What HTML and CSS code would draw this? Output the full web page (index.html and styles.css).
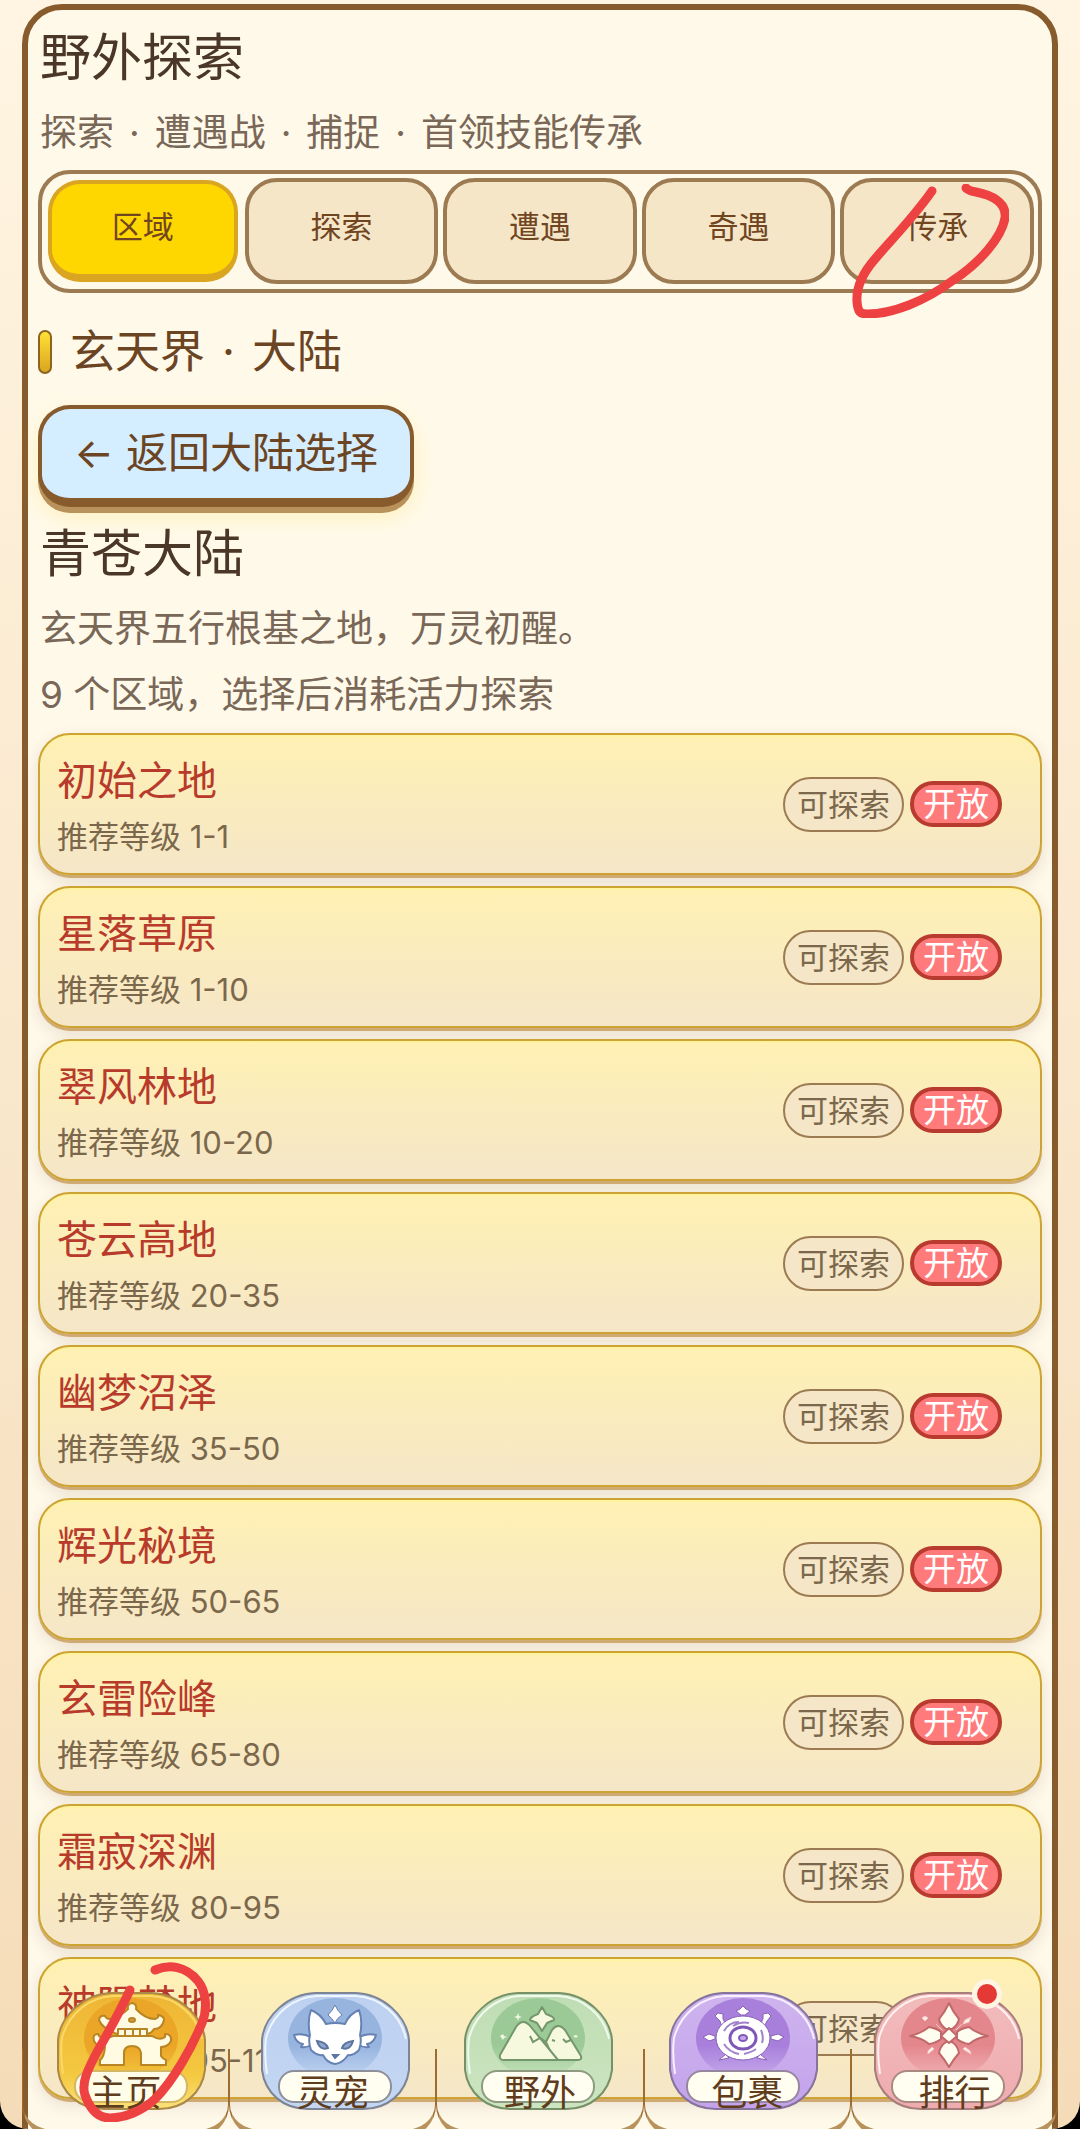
FILE: index.html
```
<!DOCTYPE html>
<html lang="zh-CN">
<head>
    <meta charset="UTF-8">
    <meta name="viewport" content="width=device-width, initial-scale=1.0">
    <title>野外探索</title>
    <link rel="stylesheet" href="styles.css">
</head>
<body>
    <div class="screen">
        <main class="panel">
            <h1 class="title">野外探索</h1>
            <p class="desc">探索<span class="dot">·</span>遭遇战<span class="dot">·</span>捕捉<span class="dot">·</span>首领技能传承</p>

            <div class="tabs">
                <button class="tab active">区域</button>
                <button class="tab">探索</button>
                <button class="tab">遭遇</button>
                <button class="tab">奇遇</button>
                <button class="tab">传承</button>
                <svg class="mark mark-tab" viewBox="0 0 160 134" aria-hidden="true">
                    <path d="M83 7C64 34 44 54 26 75C12 91 7 104 8 118C9 128 11 130 18 130C44 130 76 117 103 97C131 79 153 53 156 34C158 18 142 11 127 8Q120 7 117 4"/>
                </svg>
            </div>

            <h3 class="section">玄天界<span class="dot">·</span>大陆</h3>
            <button class="back-btn">← 返回大陆选择</button>

            <h2 class="title">青苍大陆</h2>
            <p class="desc">玄天界五行根基之地，万灵初醒。</p>
            <p class="desc">9 个区域，选择后消耗活力探索</p>

            <div class="area-list">
                <div class="area">
                    <div class="info"><div class="name">初始之地</div><div class="level">推荐等级 1-1</div></div>
                    <div class="tags"><span class="tag">可探索</span><span class="tag open">开放</span></div>
                </div>
                <div class="area">
                    <div class="info"><div class="name">星落草原</div><div class="level">推荐等级 1-10</div></div>
                    <div class="tags"><span class="tag">可探索</span><span class="tag open">开放</span></div>
                </div>
                <div class="area">
                    <div class="info"><div class="name">翠风林地</div><div class="level">推荐等级 10-20</div></div>
                    <div class="tags"><span class="tag">可探索</span><span class="tag open">开放</span></div>
                </div>
                <div class="area">
                    <div class="info"><div class="name">苍云高地</div><div class="level">推荐等级 20-35</div></div>
                    <div class="tags"><span class="tag">可探索</span><span class="tag open">开放</span></div>
                </div>
                <div class="area">
                    <div class="info"><div class="name">幽梦沼泽</div><div class="level">推荐等级 35-50</div></div>
                    <div class="tags"><span class="tag">可探索</span><span class="tag open">开放</span></div>
                </div>
                <div class="area">
                    <div class="info"><div class="name">辉光秘境</div><div class="level">推荐等级 50-65</div></div>
                    <div class="tags"><span class="tag">可探索</span><span class="tag open">开放</span></div>
                </div>
                <div class="area">
                    <div class="info"><div class="name">玄雷险峰</div><div class="level">推荐等级 65-80</div></div>
                    <div class="tags"><span class="tag">可探索</span><span class="tag open">开放</span></div>
                </div>
                <div class="area">
                    <div class="info"><div class="name">霜寂深渊</div><div class="level">推荐等级 80-95</div></div>
                    <div class="tags"><span class="tag">可探索</span><span class="tag open">开放</span></div>
                </div>
                <div class="area">
                    <div class="info"><div class="name">神陨禁地</div><div class="level">推荐等级 95-110</div></div>
                    <div class="tags"><span class="tag">可探索</span><span class="tag open">开放</span></div>
                </div>
            </div>
        </main>

        <nav class="nav">
            <svg class="nav-art" viewBox="0 0 1036 137" aria-hidden="true">
                <defs>
                    <linearGradient id="gold" x1="0" y1="0" x2="0" y2="1"><stop offset="0" stop-color="#efb535"/><stop offset="0.7" stop-color="#f4c840"/><stop offset="1" stop-color="#fbe17a"/></linearGradient>
                    <linearGradient id="blue" x1="0" y1="0" x2="0" y2="1"><stop offset="0" stop-color="#bdd0f0"/><stop offset="1" stop-color="#c3d7f4"/></linearGradient>
                    <linearGradient id="green" x1="0" y1="0" x2="0" y2="1"><stop offset="0" stop-color="#bfddb4"/><stop offset="1" stop-color="#cbe5c0"/></linearGradient>
                    <linearGradient id="purple" x1="0" y1="0" x2="0" y2="1"><stop offset="0" stop-color="#cfb4ee"/><stop offset="1" stop-color="#c3a3ec"/></linearGradient>
                    <linearGradient id="pink" x1="0" y1="0" x2="0" y2="1"><stop offset="0" stop-color="#f2bcbc"/><stop offset="1" stop-color="#efabb0"/></linearGradient>
                    <linearGradient id="fade" x1="0" y1="0" x2="0" y2="1"><stop offset="0.6" stop-color="#fff"/><stop offset="1" stop-color="#000"/></linearGradient>
                    <mask id="disc-mask" maskContentUnits="objectBoundingBox"><rect width="1" height="1" fill="url(#fade)"/></mask>
                    <path id="plate" d="M54 1H95C122 2 146 24 148 48V78C145 101 127 117 102 117H47C22 117 4 101 1 78V48C3 24 27 2 54 1Z"/>
                    <path id="shine" d="M6 82Q3 62 5 46C12 20 34 5 56 4H94C119 5 140 23 145 47"/>
                    <ellipse id="disc" cx="74" cy="46" rx="47" ry="40"/>
                    <rect id="pill" x="18" y="79" width="112" height="31" rx="15"/>
                </defs>

                <!-- 主页 -->
                <g transform="translate(35 0)">
                    <use href="#plate" fill="url(#gold)" stroke="#a9884a" stroke-width="2"/>
                    <use href="#shine" fill="none" stroke="#f9d968" stroke-width="2"/>
                    <use href="#disc" fill="#eba527" mask="url(#disc-mask)"/>
                    <g fill="#fffbe2" stroke="#b98524" stroke-width="2" stroke-linejoin="round">
                        <path d="M60 34H90V48H60Z"/>
                        <path d="M75 11Q80 12 79 17Q88 27 98 27Q102 26 101 23Q107 24 107 28Q105 37 97 37Q95 41 90 42V37H61V42Q55 41 54 37Q46 37 42 28Q43 23 48 24Q49 27 53 27Q63 25 71 17Q70 12 75 11Z"/>
                        <path d="M56 44H95Q103 49 108 45V42Q115 42 114 49Q111 55 104 55V64Q106 67 109 68V73H84V61Q83 54 75 54Q67 54 67 61V73H43V68Q47 66 48 55Q40 55 37 49Q35 42 41 42Q44 49 56 44Z"/>
                        <path d="M68 37V43M76 37V43M83 37V43"/>
                        <ellipse cx="75" cy="28" rx="3" ry="2" fill="#d9a040"/>
                    </g>
                    <use href="#pill" fill="#fffde8" stroke="#d3b763" stroke-width="2"/>
                </g>

                <!-- 灵宠 -->
                <g transform="translate(239 0)">
                    <use href="#plate" fill="url(#blue)" stroke="#7d8494" stroke-width="2"/>
                    <use href="#shine" fill="none" stroke="#eef5ff" stroke-width="2"/>
                    <use href="#disc" fill="#97b4df" mask="url(#disc-mask)"/>
                    <g fill="#fff" stroke="#6682b3" stroke-width="2" stroke-linejoin="round">
                        <path d="M50 45Q42 41 33 43Q35 51 42 52L40 55Q46 56 52 52Z"/>
                        <path d="M98 45Q106 41 115 43Q113 51 106 52L108 55Q102 56 96 52Z"/>
                        <path d="M50 18Q60 22 65 32Q74 30 84 32Q88 22 98 18Q102 29 99 43Q101 50 98 58Q92 64 87 63Q82 71 74 72Q66 71 62 63Q56 64 50 58Q47 50 49 43Q46 29 50 18Z"/>
                        <path d="M74 13Q76 18 81 23Q76 26 74 31Q71 26 67 23Q72 18 74 13Z" stroke-width="1"/>
                    </g>
                    <g fill="#8fa6cf" stroke="#5c759f" stroke-width="2">
                        <path d="M56 49Q65 50 67 56Q59 59 56 49ZM92 49Q83 50 81 56Q89 59 92 49Z"/>
                        <path d="M72 63H77L74 66Z"/>
                    </g>
                    <use href="#pill" fill="#fffef0" stroke="#8d9099" stroke-width="2"/>
                </g>

                <!-- 野外 -->
                <g transform="translate(442 0)">
                    <use href="#plate" fill="url(#green)" stroke="#789068" stroke-width="2"/>
                    <use href="#shine" fill="none" stroke="#f0faec" stroke-width="2"/>
                    <use href="#disc" fill="#9bca96" mask="url(#disc-mask)"/>
                    <g fill="#f7f9df" stroke="#75976d" stroke-width="2" stroke-linejoin="round">
                        <path d="M82 50L88 38Q94 30 101 38L117 64Q118 68 114 68H90Z"/>
                        <path d="M36 63L52 35Q59 25 67 35L94 68H40Q35 68 36 63Z"/>
                        <path d="M78 15L82 22Q91 25 90 28L83 31L78 39L73 31L66 28Q66 25 74 22Z"/>
                    </g>
                    <path d="M66 44L69 50L76 46L82 50M88 48L91 49M99 47L102 50L107 48" fill="none" stroke="#75976d" stroke-width="2"/>
                    <path d="M54 21L55 24L58 25L55 26L54 29L53 26L50 25L53 24ZM39 42L40 44L43 45L40 46L39 48L36 44ZM112 43L114 44L112 46L109 44Z" fill="#eef8e4"/>
                    <use href="#pill" fill="#fffef0" stroke="#8e9b81" stroke-width="2"/>
                </g>

                <!-- 包裹 -->
                <g transform="translate(647 0)">
                    <use href="#plate" fill="url(#purple)" stroke="#85739b" stroke-width="2"/>
                    <use href="#shine" fill="none" stroke="#f8efff" stroke-width="2"/>
                    <use href="#disc" fill="#a87fda" mask="url(#disc-mask)"/>
                    <g fill="#fff" stroke="#8a62b8" stroke-width="1" stroke-linejoin="round">
                        <path d="M34 45L40 42L46 44L46 47L40 49ZM115 45L109 42L102 44V47L109 49Z"/>
                        <path d="M74 14L77 17L81 19L76 23H72L67 19L71 17Z"/>
                        <path d="M46 24L49 21L54 22V27L57 33L53 35L51 29ZM102 24L99 21L94 22V27L91 33L95 35L98 29Z"/>
                        <path d="M57 62L50 68L60 66ZM91 62L98 68L88 66Z"/>
                        <ellipse cx="74" cy="46" rx="27" ry="22"/>
                    </g>
                    <ellipse cx="74" cy="46" rx="13" ry="11" fill="#fff" stroke="#8058b8" stroke-width="3"/>
                    <ellipse cx="74" cy="46" rx="4" ry="3" fill="#c6a4e8" stroke="#8058b8" stroke-width="2"/>
                    <path d="M55 39Q60 30 70 30M64 34Q72 29 80 31M92 38Q95 45 93 51M55 52Q60 60 70 62M75 62Q83 60 87 57" fill="none" stroke="#a283cb" stroke-width="2"/>
                    <use href="#pill" fill="#fffef0" stroke="#97879e" stroke-width="2"/>
                </g>

                <!-- 排行 -->
                <g transform="translate(852 0)">
                    <use href="#plate" fill="url(#pink)" stroke="#a57d7a" stroke-width="2"/>
                    <use href="#shine" fill="none" stroke="#fff1ef" stroke-width="2"/>
                    <use href="#disc" fill="#e4878d" mask="url(#disc-mask)"/>
                    <path d="M51 24L54 26L51 29L48 26ZM97 25L91 28L89 32L95 30ZM54 62L60 57L58 55L54 59ZM97 62L89 57L91 55L96 59ZM62 32L68 38M88 32L82 38" fill="#fff0ea" stroke="#f6c9c5" stroke-width="1"/>
                    <g fill="#fffdef" stroke="#c0696a" stroke-width="2" stroke-linejoin="round">
                        <path d="M75 11Q79 20 85 27Q84 33 78 37H72Q66 33 65 27Q71 20 75 11Z"/>
                        <path d="M75 75Q79 68 85 61Q84 54 78 50H72Q66 54 65 61Q71 68 75 75Z"/>
                        <path d="M36 44Q48 41 55 35Q62 36 67 40V47Q62 51 55 52Q48 46 36 44Z"/>
                        <path d="M114 44Q102 41 95 35Q88 36 83 40V47Q88 51 95 52Q102 46 114 44Z"/>
                        <path d="M75 36L83 44L75 51L67 44Z"/>
                    </g>
                    <use href="#pill" fill="#fffef0" stroke="#a98a80" stroke-width="2"/>
                </g>
            </svg>
            <button class="nav-btn">主页</button>
            <button class="nav-btn">灵宠</button>
            <button class="nav-btn">野外</button>
            <button class="nav-btn">包裹</button>
            <button class="nav-btn">排行<span class="badge"></span></button>
            <svg class="mark mark-nav" viewBox="0 0 136 160" aria-hidden="true">
                <path d="M54 28C44 49 32 71 21 90C12 107 5 121 9 133C14 147 22 156 34 156C49 156 66 149 79 137C98 118 116 85 126 61C132 47 130 29 122 19C110 4 93 2 79 8"/>
            </svg>
        </nav>
    </div>
</body>
</html>
```
FILE: styles.css
```
* {
    box-sizing: border-box;
}
body {
    margin: 0;
    background-color: #000;
    font-family: Inter, "Noto Sans CJK SC", sans-serif;
    color: #4a3728;
}
button {
    font-family: inherit;
    font-weight: 400;
    cursor: pointer;
}
.screen {
    position: relative;
    height: 100vh;
    overflow: hidden;
    padding: 4px 22px 0;
    border-radius: 0 0 28px 28px;
    background: linear-gradient(#fff5e2, #fbebd2 35%, #f5dcb8);
}

/* Painel */
.panel {
    padding: 18px 10px 120px;
    border: 6px solid #875b2c;
    border-radius: 40px;
    background-color: #fff9ea;
}
.title {
    margin: 0 0 12px;
    padding-left: 2px;
    font-size: 51px;
    font-weight: 400;
    line-height: 60px;
}
.desc {
    margin: 0;
    padding-left: 2px;
    font-size: 37px;
    line-height: 66px;
    color: #796757;
}
.dot {
    margin: 0 15px;
}

.tabs {
    position: relative;
    display: grid;
    grid-template-columns: repeat(5, 1fr);
    gap: 5px;
    height: 123px;
    margin-top: 4px;
    padding: 4px 4px 5px;
    border: 4px solid #9c7a52;
    border-radius: 32px;
}
.tab {
    padding: 0 0 14px;
    border: 4px solid #9c7a52;
    border-radius: 32px;
    background-color: #f5e6c8;
    font-size: 31px;
    color: #70451f;
}
.tab.active {
    margin: 2px;
    padding-bottom: 10px;
    border-color: #daa520;
    border-bottom-width: 8px;
    background-color: #ffd700;
}

.section {
    display: flex;
    align-items: center;
    margin: 31px 0 25px;
    font-size: 45px;
    font-weight: 400;
    line-height: 56px;
    color: #6b4423;
}
.section::before {
    content: "";
    width: 10px;
    height: 40px;
    margin-right: 18px;
    border: 2px solid #8b6420;
    border-radius: 7px;
    background: linear-gradient(#ffe135, #daa520);
}
.section .dot {
    margin: 0 17px;
}
.back-btn {
    display: block;
    height: 102px;
    margin-bottom: 17px;
    padding: 0 32px 8px;
    border: 4px solid #875b2c;
    border-bottom-width: 9px;
    border-radius: 32px;
    background-color: #d4edff;
    box-shadow: 0 6px 0 #b8925a, 0 10px 24px rgba(255, 215, 0, 0.2);
    font-size: 42px;
    color: #6b4423;
}

/* Lista de areas */
.area-list {
    display: flex;
    flex-direction: column;
    gap: 11px;
    margin-top: 5px;
}
.area {
    display: flex;
    justify-content: space-between;
    align-items: center;
    height: 142px;
    padding: 0 38px 0 17px;
    border: 2px solid #cda434;
    border-radius: 32px;
    background: linear-gradient(#fff1b3, #f5e6c8);
    box-shadow: inset 0 2px 0 #fff3a0, 0 3px 0 #cfaa72, 0 6px 16px rgba(90, 60, 30, 0.14);
}
.info {
    padding-top: 9px;
}
.name {
    font-size: 40px;
    line-height: 56px;
    color: #b83a2a;
}
.level {
    font-size: 31px;
    line-height: 56px;
    color: #7b684c;
}
.tags {
    display: flex;
    align-items: center;
    gap: 6px;
}
.tag {
    padding: 0 12px;
    border: 2px solid #9c7a52;
    border-radius: 28px;
    background-color: #f5e6c8;
    font-size: 31px;
    line-height: 51px;
    color: #7b684c;
}
.tag.open {
    padding: 0 9px;
    border: 4px solid #b93a2f;
    background-color: #ff7b7b;
    font-size: 33px;
    line-height: 38px;
    color: #fff;
}

/* Menu inferior */
.nav {
    position: absolute;
    left: 22px;
    right: 22px;
    bottom: -8px;
    display: flex;
}
.nav-art {
    position: absolute;
    left: 0;
    bottom: 8px;
    width: 100%;
}
.nav-btn {
    position: relative;
    flex: 1;
    height: 88px;
    padding: 0;
    border: 1px solid #9c6c30;
    border-top: none;
    border-bottom: 7px solid #b8925a;
    border-radius: 0 0 32px 32px;
    background: none;
    font-size: 36px;
    color: #5f3c1c;
}
.badge {
    position: absolute;
    top: -70px;
    right: 55px;
    width: 30px;
    height: 30px;
    border: 5px solid #fff5e2;
    border-radius: 50%;
    background-color: #e53935;
}

.mark {
    position: absolute;
    fill: none;
    stroke: #ee4242;
    stroke-width: 9;
    stroke-linecap: round;
    stroke-linejoin: round;
    pointer-events: none;
}
.mark-tab {
    top: 10px;
    right: 29px;
    width: 160px;
}
.mark-nav {
    left: 54px;
    bottom: 15px;
    width: 136px;
}
```
